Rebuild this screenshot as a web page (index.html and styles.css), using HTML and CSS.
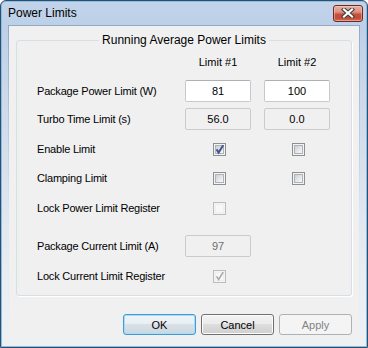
FILE: index.html
```html
<!DOCTYPE html>
<html>
<head>
<meta charset="utf-8">
<title>Power Limits</title>
<link rel="stylesheet" href="styles.css">
</head>
<body>
<div class="window">
  <div class="titlebar">
    <span class="title">Power Limits</span>
    <button class="close" aria-label="Close">
      <svg width="14" height="10" viewBox="0 0 14 10">
        <path d="M3 1.5 L11 8.5 M11 1.5 L3 8.5" stroke="#3d3d3d" stroke-width="4.2" stroke-linecap="square" fill="none"/>
        <path d="M3 1.5 L11 8.5 M11 1.5 L3 8.5" stroke="#ffffff" stroke-width="2.2" stroke-linecap="square" fill="none"/>
      </svg>
    </button>
  </div>
  <div class="client">
    <fieldset class="group">
      <legend>Running Average Power Limits</legend>
      <div class="row head">
        <span></span>
        <span class="colhead">Limit #1</span>
        <span class="colhead">Limit #2</span>
      </div>
      <div class="row mt9">
        <span class="label">Package Power Limit (W)</span>
        <div class="field">81</div>
        <div class="field">100</div>
      </div>
      <div class="row mt6">
        <span class="label">Turbo Time Limit (s)</span>
        <div class="field readonly">56.0</div>
        <div class="field readonly">0.0</div>
      </div>
      <div class="row mt8">
        <span class="label">Enable Limit</span>
        <div class="cb"><div class="cb-inner"></div>
          <svg class="check" width="13" height="13" viewBox="0 0 13 13"><path d="M3.6 6.4 L5.6 9.6 L10.2 2.2" stroke="#42568d" stroke-width="2" fill="none"/></svg>
        </div>
        <div class="cb"><div class="cb-inner"></div></div>
      </div>
      <div class="row mt7">
        <span class="label">Clamping Limit</span>
        <div class="cb"><div class="cb-inner"></div></div>
        <div class="cb"><div class="cb-inner"></div></div>
      </div>
      <div class="row mt8">
        <span class="label">Lock Power Limit Register</span>
        <div class="cb disabled"><div class="cb-inner"></div></div>
        <span></span>
      </div>
      <div class="row mt16">
        <span class="label">Package Current Limit (A)</span>
        <div class="field disabled">97</div>
        <span></span>
      </div>
      <div class="row mt8">
        <span class="label">Lock Current Limit Register</span>
        <div class="cb disabled"><div class="cb-inner"></div>
          <svg class="check" width="13" height="13" viewBox="0 0 13 13"><path d="M3.6 6.4 L5.6 9.6 L10.2 2.2" stroke="#a8a8a8" stroke-width="1.6" fill="none"/></svg>
        </div>
        <span></span>
      </div>
    </fieldset>
    <div class="buttons">
      <button class="btn default">OK</button>
      <button class="btn">Cancel</button>
      <button class="btn" disabled>Apply</button>
    </div>
  </div>
</div>
</body>
</html>
```

FILE: styles.css
```css
html, body {
  margin: 0;
  padding: 0;
}

body {
  width: 368px;
  height: 348px;
  overflow: hidden;
  background: #ffffff;
  font-family: "Liberation Sans", Arial, sans-serif;
  font-size: 11px;
  color: #000;
}

.window {
  box-sizing: border-box;
  width: 368px;
  height: 348px;
  border: 1px solid #3a4a60;
  border-radius: 6px 6px 0 0;
  background: linear-gradient(to bottom, #c2d4ea 0px, #bcd0e8 24px, #c4d5ea 60px, #d8e2ee 170px, #e9eef3 280px, #eef1f4 100%);
  box-shadow: inset 0 0 0 1px #7fc1ec;
  display: flex;
  flex-direction: column;
  padding: 0 7px 7px;
}

.titlebar {
  height: 24px;
  margin: 0 -7px;
  padding: 0 4px 0 7px;
  display: flex;
  align-items: center;
}

.title {
  font-size: 12px;
  color: #000;
}

.close {
  margin-left: auto;
  width: 30px;
  height: 17px;
  box-sizing: border-box;
  padding: 0;
  border: 1px solid #6b2a22;
  border-radius: 3px;
  background: linear-gradient(to bottom, #e9ad9f 0%, #dc9282 40%, #c8503b 55%, #c44a35 80%, #d0705c 100%);
  box-shadow: inset 0 0 0 1px rgba(255, 220, 210, 0.45);
  display: flex;
  align-items: center;
  justify-content: center;
}

.client {
  flex: 1;
  background: #f0f0f0;
  border: 1px solid;
  border-image: linear-gradient(to bottom, #93a9c5, #dfe6ee 60%, #eef1f4) 1;
  padding-top: 7px;
}

.group {
  margin: 0 7px;
  padding: 0 20px 8px;
  border: 1px solid #d5dfe5;
  border-radius: 3px;
  box-shadow: 1px 1px 0 #ffffff;
  min-width: 0;
}

.group legend {
  margin: 0 auto;
  padding: 0 3px;
  font-size: 12px;
  line-height: 15px;
  color: #000;
}

.row {
  display: grid;
  grid-template-columns: 135px 66px 66px;
  column-gap: 13px;
  align-items: center;
  height: 22px;
}

.row.head {
  height: 18px;
  margin-top: 5px;
}

.mt6 { margin-top: 6px; }
.mt7 { margin-top: 7px; }
.mt8 { margin-top: 8px; }
.mt9 { margin-top: 9px; }
.mt16 { margin-top: 16px; }

.colhead {
  text-align: center;
}

.label {
  white-space: nowrap;
  letter-spacing: -0.2px;
}

.field {
  box-sizing: border-box;
  height: 22px;
  border: 1px solid #c6c9ce;
  border-top-color: #adb0b6;
  border-radius: 2px;
  background: #ffffff;
  text-align: center;
  line-height: 20px;
}

.field.readonly {
  background: #f0f0f0;
  border-color: #c9cbce;
}

.field.disabled {
  background: #f0f0f0;
  border-color: #c9cbce;
  color: #6d6d6d;
}

.cb {
  position: relative;
  box-sizing: border-box;
  width: 13px;
  height: 13px;
  margin-left: 28px;
  border: 1px solid #8e8f8f;
  background: #f4f4f4;
  padding: 1px;
}

.cb-inner {
  box-sizing: border-box;
  width: 9px;
  height: 9px;
  border: 1px solid #aeb2b8;
  background: linear-gradient(135deg, #cbcfd5 0%, #e3e5e8 50%, #f8f8f8 100%);
}

.cb.disabled {
  border-color: #bcbcbc;
}

.cb.disabled .cb-inner {
  border-color: #eeeeee;
  background: #f7f7f7;
}

.check {
  position: absolute;
  left: -1px;
  top: -1px;
}

.buttons {
  display: flex;
  justify-content: flex-end;
  gap: 5px;
  margin: 18px 7px 0 0;
}

.btn {
  box-sizing: border-box;
  width: 73px;
  height: 21px;
  padding: 0;
  border: 1px solid #707070;
  border-radius: 3px;
  background: linear-gradient(to bottom, #f2f2f2 0%, #ebebeb 49%, #dddddd 50%, #cfcfcf 100%);
  box-shadow: inset 0 0 0 1px #fcfcfc;
  font-family: "Liberation Sans", Arial, sans-serif;
  font-size: 11px;
  color: #000;
}

.btn.default {
  border-color: #3c9bd9;
  box-shadow: inset 0 0 0 1px #a9dcf6;
  background: linear-gradient(to bottom, #f0f4f7 0%, #e8eef2 49%, #d8e1e7 50%, #cbd6de 100%);
}

.btn:disabled {
  border-color: #adb2b5;
  background: #f4f4f4;
  box-shadow: none;
  color: #838383;
}
```
